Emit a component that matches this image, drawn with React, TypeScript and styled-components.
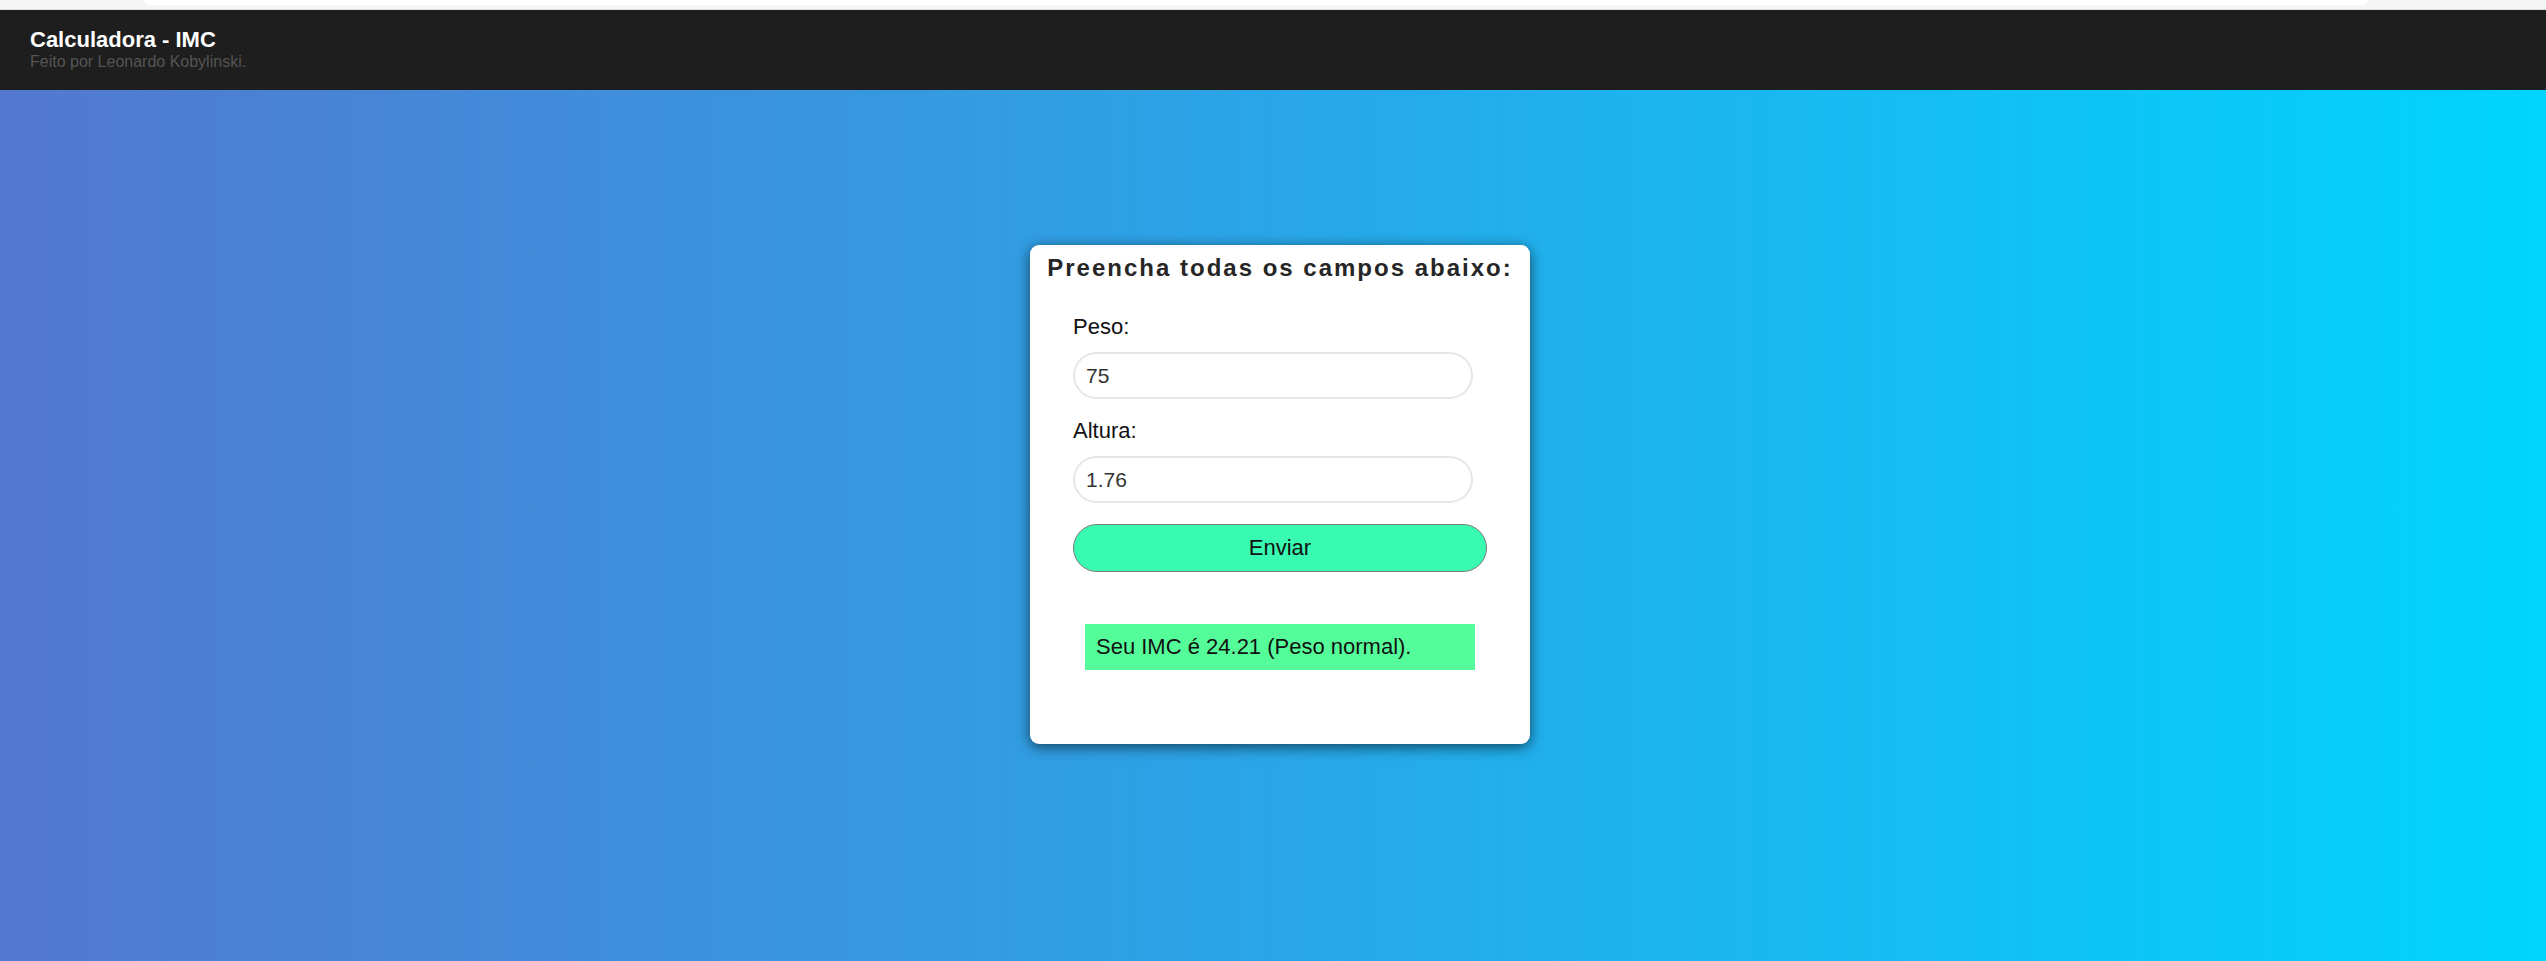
import styled, { createGlobalStyle } from "styled-components";

export default function App() {
    return (
        <>
            <GlobalStyle />
            <Page>
                <BrowserStrip>
                    <AddressBox />
                </BrowserStrip>
                <Header>
                    <Title>Calculadora - IMC</Title>
                    <Subtitle>Feito por Leonardo Kobylinski.</Subtitle>
                </Header>
                <Main>
                    <Card>
                        <CardTitle>Preencha todas os campos abaixo:</CardTitle>
                        <Form>
                            <Label>Peso:</Label>
                            <Input defaultValue="75" />
                            <Label $top={19}>Altura:</Label>
                            <Input defaultValue="1.76" />
                            <Button type="button">Enviar</Button>
                        </Form>
                        <Result>Seu IMC é 24.21 (Peso normal).</Result>
                    </Card>
                </Main>
            </Page>
        </>
    );
}

const GlobalStyle = createGlobalStyle`
    html, body {
        margin: 0;
        padding: 0;
    }
    body {
        font-family: "Liberation Sans", Arial, sans-serif;
    }
`;

const Page = styled.div`
    display: flex;
    flex-direction: column;
    min-height: 961px;
`;

const BrowserStrip = styled.div`
    height: 9px;
    background: #f5f5f5;
    border-bottom: 1px solid #dedede;
    padding: 0 178px 0 144px;
`;

const AddressBox = styled.div`
    height: 5px;
    background: #ffffff;
    border-radius: 0 0 6px 6px;
`;

const Header = styled.header`
    height: 80px;
    box-sizing: border-box;
    background: #1e1e1e;
    padding: 18px 30px 0;
`;

const Title = styled.div`
    color: #ffffff;
    font-weight: bold;
    font-size: 22px;
    line-height: 24px;
`;

const Subtitle = styled.div`
    color: #555555;
    font-size: 16px;
    line-height: 18px;
    margin-top: 1px;
`;

const Main = styled.main`
    flex: 1;
    display: flex;
    justify-content: center;
    align-items: flex-start;
    padding: 155px 0 0 14px;
    background: linear-gradient(90deg, rgb(83, 120, 208) 0%, rgb(0, 212, 255) 100%);
`;

const Card = styled.section`
    width: 500px;
    height: 499px;
    box-sizing: border-box;
    background: #ffffff;
    border-radius: 9px;
    box-shadow: 0 3px 14px rgba(0, 0, 0, 0.6);
    padding-top: 9px;
`;

const CardTitle = styled.h1`
    margin: 0;
    text-align: center;
    font-size: 24px;
    line-height: 28px;
    font-weight: bold;
    letter-spacing: 2px;
    color: #262626;
`;

const Form = styled.form`
    display: flex;
    flex-direction: column;
    align-items: flex-start;
    padding: 0 43px;
    margin-top: 32px;
`;

const Label = styled.label<{ $top?: number }>`
    font-size: 22px;
    line-height: 25px;
    color: #111111;
    margin-top: ${(p) => p.$top ?? 0}px;
    margin-bottom: 13px;
`;

const Input = styled.input`
    width: 400px;
    height: 47px;
    box-sizing: border-box;
    border: 2px solid #e6e6e6;
    border-radius: 24px;
    padding: 0 11px;
    font-family: "Liberation Sans", Arial, sans-serif;
    font-size: 21px;
    color: #333333;
    outline: none;
`;

const Button = styled.button`
    width: 414px;
    height: 48px;
    margin-top: 21px;
    border: 1px solid #7a7a7a;
    border-radius: 24px;
    background: #38fab1;
    font-family: "Liberation Sans", Arial, sans-serif;
    font-size: 22px;
    color: #111111;
    cursor: pointer;
`;

const Result = styled.div`
    width: 390px;
    box-sizing: border-box;
    margin: 52px auto 0;
    padding: 10px 11px;
    background: #55fd9a;
    font-size: 22px;
    line-height: 26px;
    color: #111111;
`;
